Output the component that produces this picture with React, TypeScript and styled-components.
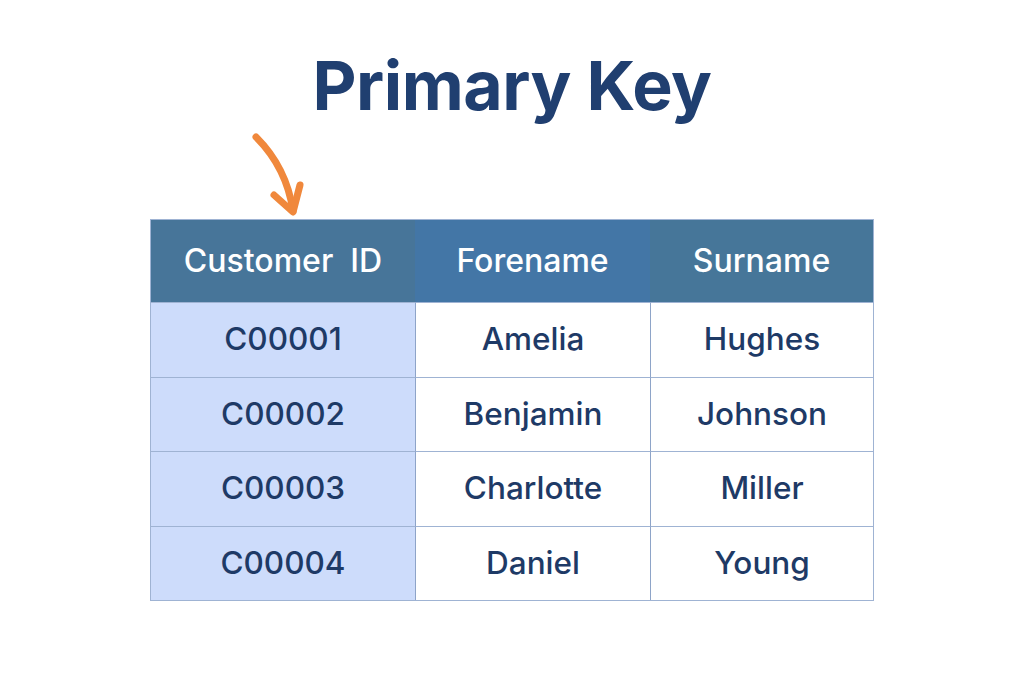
import React from "react";
import styled, { createGlobalStyle } from "styled-components";

const Global = createGlobalStyle`
  html, body { margin: 0; padding: 0; background: #ffffff; }
  body { font-family: Inter, "Noto Sans", sans-serif; }
`;

const Page = styled.div`
  width: 1024px;
  height: 683px;
  display: flex;
  flex-direction: column;
  align-items: center;
  background: #ffffff;
`;

const Title = styled.h1`
  margin: 44px 0 0 0;
  font-family: Inter, sans-serif;
  font-weight: 700;
  font-size: 68px;
  line-height: 82px;
  color: #203f70;
  letter-spacing: -0.5px;
`;

const Stage = styled.div`
  position: relative;
  margin-top: 93px;
`;

const Arrow = styled.svg`
  position: absolute;
  left: 100px;
  top: -86px;
`;

const Table = styled.div`
  display: grid;
  grid-template-columns: 264px 235px 223px;
  grid-template-rows: 82px 75px 74px 75px 74px;
  border: 1px solid #9fb3d3;
  box-sizing: border-box;
  width: 724px;
`;

const Head = styled.div<{ $bg: string }>`
  display: flex;
  align-items: center;
  justify-content: center;
  background: ${(p) => p.$bg};
  color: #ffffff;
  font-size: 32px;
  font-weight: 500;
  white-space: pre;
  padding-bottom: 2px;
`;

const Cell = styled.div<{ $key?: boolean; $col: number }>`
  display: flex;
  align-items: center;
  justify-content: center;
  background: ${(p) => (p.$key ? "#cddcfb" : "#ffffff")};
  color: #1e3a66;
  font-size: 31.5px;
  font-weight: 500;
  border-top: 1px solid #9fb3d3;
  border-left: ${(p) => (p.$col > 0 ? "1px solid #8ea4c8" : "none")};
  padding-bottom: 3px;
`;

const rows = [
  ["C00001", "Amelia", "Hughes"],
  ["C00002", "Benjamin", "Johnson"],
  ["C00003", "Charlotte", "Miller"],
  ["C00004", "Daniel", "Young"],
];

export default function App() {
  return (
    <Page>
      <Global />
      <Title>Primary Key</Title>
      <Stage>
        <Arrow width="70" height="90" viewBox="0 0 70 90">
          <path
            d="M6 4 C 22 20, 38 44, 43 78"
            fill="none"
            stroke="#f0883c"
            strokeWidth="7"
            strokeLinecap="round"
          />
          <path
            d="M24 62 L 43 79 L 50 52"
            fill="none"
            stroke="#f0883c"
            strokeWidth="7"
            strokeLinecap="round"
            strokeLinejoin="round"
          />
        </Arrow>
        <Table>
          <Head $bg="#477599">{"Customer  ID"}</Head>
          <Head $bg="#4376a6">Forename</Head>
          <Head $bg="#467699">Surname</Head>
          {rows.map((r) =>
            r.map((v, i) => (
              <Cell key={r[0] + i} $col={i} $key={i === 0}>
                {v}
              </Cell>
            ))
          )}
        </Table>
      </Stage>
    </Page>
  );
}
